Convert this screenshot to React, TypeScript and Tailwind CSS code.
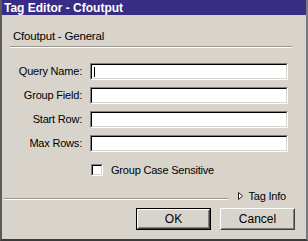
import React from "react";

const font = { fontFamily: '"Liberation Sans", Arial, sans-serif' };

function Sunken({ children, className = "" }: { children?: React.ReactNode; className?: string }) {
  return (
    <div className={`border border-t-[#808080] border-l-[#808080] border-r-white border-b-white ${className}`}>
      <div className="h-full w-full border border-t-black border-l-black border-r-[#d8d4cc] border-b-[#d8d4cc] bg-white">
        {children}
      </div>
    </div>
  );
}

function Button({ label, isDefault = false }: { label: string; isDefault?: boolean }) {
  const inner = (
    <div className="h-full w-full border border-t-white border-l-white border-r-[#404040] border-b-[#404040]">
      <div className="flex h-full w-full items-center justify-center border border-t-[#d8d4cc] border-l-[#d8d4cc] border-r-[#808080] border-b-[#808080] text-[12px] text-black">
        {label}
      </div>
    </div>
  );
  return (
    <div className={`h-[22px] w-[75px] ${isDefault ? "border border-black" : ""}`}>{inner}</div>
  );
}

const rows = ["Query Name:", "Group Field:", "Start Row:", "Max Rows:"];

export default function App() {
  return (
    <div
      className="flex h-[241px] w-[308px] flex-col overflow-hidden border-l-2 border-r-2 border-b-2 border-l-[#5a5a5a] border-r-[#7a7a7a] border-b-[#3a3a3a] bg-[#d8d4cc] text-black"
      style={font}
    >
      <div className="flex h-[15px] shrink-0 items-center bg-[#382c84] pl-[2px] text-[12px] font-bold leading-none text-white">
        Tag Editor - Cfoutput
      </div>

      <div className="ml-[11px] mt-[14px] h-[14px] text-[11.5px] leading-[14px] tracking-[-0.2px]">Cfoutput - General</div>
      <div className="ml-[8px] mt-[3px] w-[282px] border-t border-b border-t-[#9a968e] border-b-white" />

      <div className="mt-[15px] grid grid-cols-[80px_198px] gap-x-[8px] gap-y-[7px] text-[11px] tracking-[-0.2px]">
        {rows.map((r, i) => (
          <React.Fragment key={r}>
            <div className="flex h-[17px] items-center justify-end">{r}</div>
            <Sunken className="h-[17px]">
              {i === 0 ? <div className="ml-[2px] mt-[2px] h-[10px] w-px bg-black" /> : null}
            </Sunken>
          </React.Fragment>
        ))}
      </div>

      <div className="ml-[89px] mt-[12px] flex items-center gap-[8px] text-[11px] tracking-[-0.2px]">
        <Sunken className="h-[12px] w-[12px]" />
        <span className="leading-[12px]">Group Case Sensitive</span>
      </div>

      <div className="mt-[13px] flex h-[14px] items-center pr-[20px] text-[11px] tracking-[-0.2px]">
        <div className="ml-[2px] mt-[6px] flex-1 border-t border-b border-t-[#9a968e] border-b-white" />
        <svg width="5" height="8" viewBox="0 0 5 8" className="ml-[10px]">
          <polygon points="0.5,0.5 4.5,4 0.5,7.5" fill="white" stroke="#202020" strokeWidth="1" />
        </svg>
        <span className="ml-[5px] leading-[14px]">Tag Info</span>
      </div>

      <div className="mt-[5px] flex justify-end gap-[9px] pr-[11px]">
        <Button label="OK" isDefault />
        <Button label="Cancel" />
      </div>
    </div>
  );
}
